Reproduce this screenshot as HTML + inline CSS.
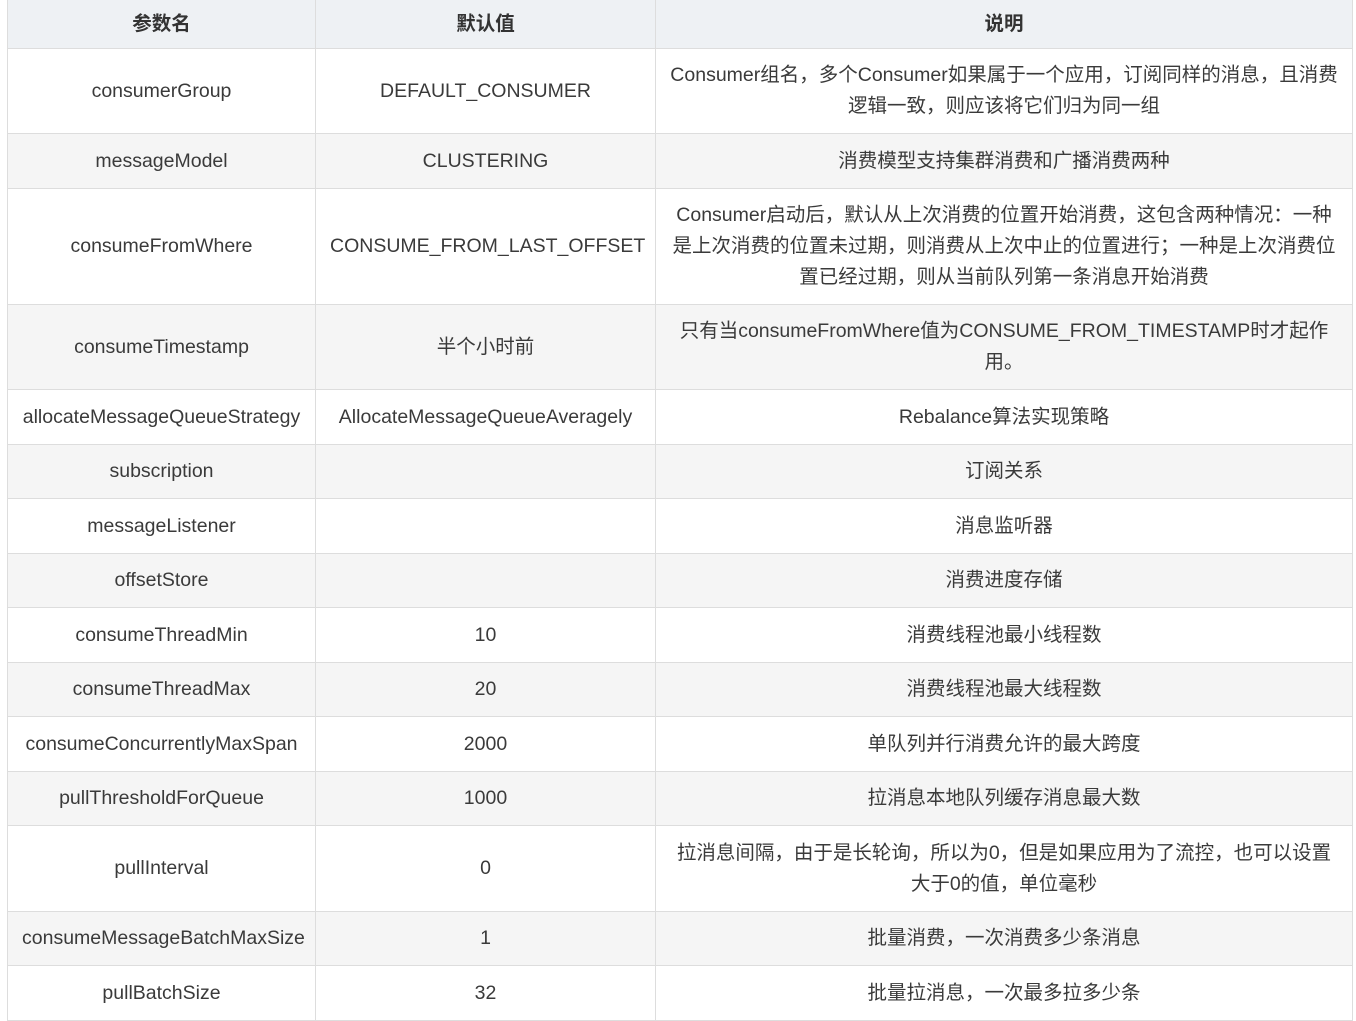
<!DOCTYPE html>
<html><head><meta charset="utf-8"><style>
html,body{margin:0;padding:0;background:#fff;width:1356px;height:1021px;overflow:hidden}
table{position:absolute;left:7px;top:-1px;border-collapse:collapse;table-layout:fixed;width:1345px;
font-family:"Liberation Sans","Noto Sans CJK SC",sans-serif;font-size:19.5px;color:#3a3a3a}
td,th{border:1px solid #dddddd;text-align:center;vertical-align:middle;padding:0 14px;line-height:31px;box-sizing:border-box}
th{background:#eef1f4;font-weight:bold;color:#333}
tr:nth-child(even) td{background:#fff}
tr:nth-child(odd) td{background:#f5f5f5}
</style></head><body>
<table>
<colgroup><col style="width:308px"><col style="width:340px"><col style="width:697px"></colgroup>
<tr style="height:49px"><th>参数名</th><th>默认值</th><th>说明</th></tr>
<tr style="height:85px"><td>consumerGroup</td><td>DEFAULT_CONSUMER</td><td>Consumer组名，多个Consumer如果属于一个应用，订阅同样的消息，且消费逻辑一致，则应该将它们归为同一组</td></tr>
<tr style="height:55px"><td>messageModel</td><td>CLUSTERING</td><td>消费模型支持集群消费和广播消费两种</td></tr>
<tr style="height:116px"><td>consumeFromWhere</td><td>CONSUME_FROM_LAST_OFFSET</td><td>Consumer启动后，默认从上次消费的位置开始消费，这包含两种情况：一种是上次消费的位置未过期，则消费从上次中止的位置进行；一种是上次消费位置已经过期，则从当前队列第一条消息开始消费</td></tr>
<tr style="height:85px"><td>consumeTimestamp</td><td>半个小时前</td><td>只有当consumeFromWhere值为CONSUME_FROM_TIMESTAMP时才起作用。</td></tr>
<tr style="height:55px"><td>allocateMessageQueueStrategy</td><td>AllocateMessageQueueAveragely</td><td>Rebalance算法实现策略</td></tr>
<tr style="height:54px"><td>subscription</td><td></td><td>订阅关系</td></tr>
<tr style="height:55px"><td>messageListener</td><td></td><td>消息监听器</td></tr>
<tr style="height:54px"><td>offsetStore</td><td></td><td>消费进度存储</td></tr>
<tr style="height:55px"><td>consumeThreadMin</td><td>10</td><td>消费线程池最小线程数</td></tr>
<tr style="height:54px"><td>consumeThreadMax</td><td>20</td><td>消费线程池最大线程数</td></tr>
<tr style="height:55px"><td>consumeConcurrentlyMaxSpan</td><td>2000</td><td>单队列并行消费允许的最大跨度</td></tr>
<tr style="height:54px"><td>pullThresholdForQueue</td><td>1000</td><td>拉消息本地队列缓存消息最大数</td></tr>
<tr style="height:86px"><td>pullInterval</td><td>0</td><td>拉消息间隔，由于是长轮询，所以为0，但是如果应用为了流控，也可以设置大于0的值，单位毫秒</td></tr>
<tr style="height:54px"><td>consumeMessageBatchMaxSize</td><td>1</td><td>批量消费，一次消费多少条消息</td></tr>
<tr style="height:55px"><td>pullBatchSize</td><td>32</td><td>批量拉消息，一次最多拉多少条</td></tr>
</table>
</body></html>
